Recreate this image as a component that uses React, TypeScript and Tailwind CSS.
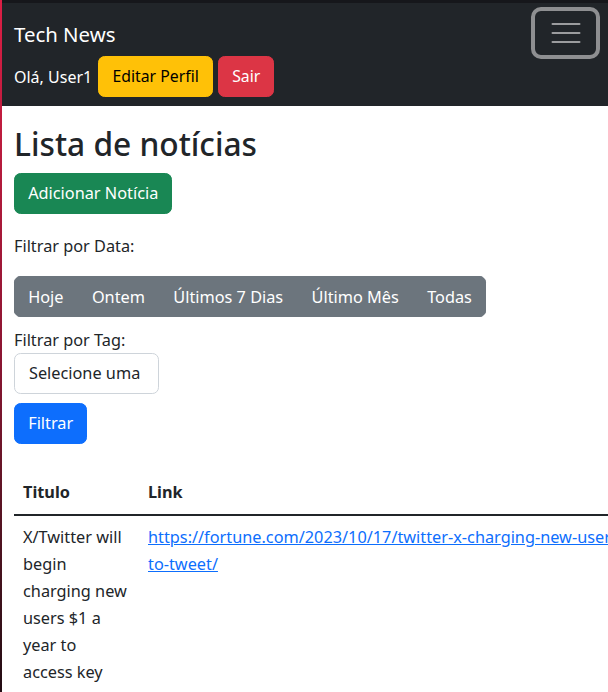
import React from "react";

const tags = ["Hoje", "Ontem", "Últimos 7 Dias", "Último Mês", "Todas"];

function Toggler() {
  return (
    <button className="-mt-[5px] flex h-[52px] w-[69px] items-center justify-center rounded-[10px] border-[4px] border-[#8e8f91] bg-transparent">
      <svg width="30" height="30" viewBox="0 0 30 30" fill="none">
        <path
          d="M1.5 6h27M1.5 15h27M1.5 24h27"
          stroke="#9b9c9e"
          strokeWidth="2"
          strokeLinecap="round"
        />
      </svg>
    </button>
  );
}

export default function App() {
  return (
    <div className="relative min-h-[692px] overflow-hidden bg-white font-['Noto_Sans','Open_Sans',sans-serif] text-[16.3px] leading-[1.5] text-[#212529]">
      {/* thin window edge on the left */}
      <div className="absolute left-0 top-0 h-full w-[2px] bg-gradient-to-b from-[#dc1f45] via-[#8a1532] to-[#1a0a10]" />

      <div className="h-[3px] bg-[#16171b]" />

      {/* Navbar */}
      <nav className="bg-[#212529] pl-[14px] pr-[8px] pt-[9px] pb-[9px]">
        <div className="flex items-start justify-between">
          <div>
            <div className="py-[5.5px] text-[20.4px] leading-[33px] text-white">
              Tech News
            </div>
            <div className="flex items-center">
              <span className="mr-[6px] text-[16px] text-white">Olá, User1</span>
              <button className="mr-[5px] h-[41px] rounded-[6.6px] border border-[#ffc107] bg-[#ffc107] px-[13.2px] text-[15.8px] leading-[26.4px] text-black">
                Editar Perfil
              </button>
              <button className="h-[41px] rounded-[6.6px] border border-[#dc3545] bg-[#dc3545] px-[13.2px] text-[15.8px] leading-[26.4px] text-white">
                Sair
              </button>
            </div>
          </div>
          <Toggler />
        </div>
      </nav>

      {/* Content */}
      <main className="px-[14px]">
        <h2 className="mt-[17px] mb-[8px] text-[31.7px] font-medium leading-[42px]">
          Lista de notícias
        </h2>
        <button className="h-[41px] rounded-[6.6px] border border-[#198754] bg-[#198754] px-[13.2px] leading-[26.4px] text-white">
          Adicionar Notícia
        </button>

        <div className="mt-[19px] leading-[26.4px]">Filtrar por Data:</div>
        <div className="mt-[17px] inline-flex overflow-hidden rounded-[6.6px] bg-[#6c757d]">
          {tags.map((t) => (
            <button
              key={t}
              className="h-[41px] whitespace-nowrap border border-[#6c757d] px-[13.2px] leading-[26.4px] text-white"
            >
              {t}
            </button>
          ))}
        </div>

        <div className="mt-[10px] leading-[26.4px]">Filtrar por Tag:</div>
        <div className="-mt-[1px] flex h-[41px] w-[145px] items-center whitespace-nowrap rounded-[6.6px] border border-[#ced4da] px-[14px]">
          Selecione uma
        </div>
        <button className="mt-[9px] h-[41px] rounded-[6.6px] border border-[#0d6efd] bg-[#0d6efd] px-[13.2px] leading-[26.4px] text-white">
          Filtrar
        </button>

        <table className="mt-[28px] w-[1000px] border-collapse text-left leading-[27px]">
          <thead className="border-b-2 border-[#212529]">
            <tr>
              <th className="w-[125px] px-[9px] py-[7.5px] font-bold">Titulo</th>
              <th className="px-[9px] py-[7.5px] font-bold">Link</th>
            </tr>
          </thead>
          <tbody>
            <tr>
              <td className="w-[125px] px-[9px] py-[8.5px] align-top">
                X/Twitter will begin charging new users $1 a year to access key features?
              </td>
              <td className="px-[9px] py-[8.5px] align-top">
                <a href="#" className="text-[#0d6efd] underline">
                  <span className="whitespace-nowrap">
                    https://fortune.com/2023/10/17/twitter-x-charging-new-users-1-a-year-
                  </span>
                  <br />
                  to-tweet/
                </a>
              </td>
            </tr>
          </tbody>
        </table>
      </main>
    </div>
  );
}
